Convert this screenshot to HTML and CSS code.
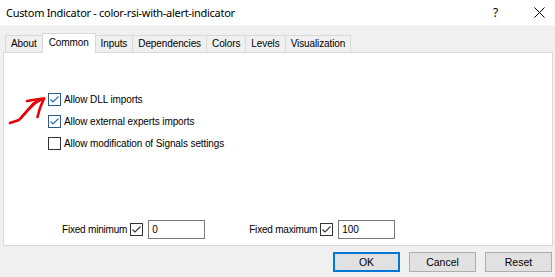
FILE: index.html
```html
<!DOCTYPE html>
<html lang="en">
<head>
  <meta charset="UTF-8" />
  <title>Custom Indicator</title>
  <link rel="stylesheet" href="styles.css">
</head>
<body>
  <div class="window">
    <div class="titlebar">
      <span class="title">Custom Indicator - color-rsi-with-alert-indicator</span>
      <span class="help">?</span>
      <svg class="close" width="11" height="11" viewBox="0 0 11 11">
        <path d="M0.5 0.5 L10.5 10.5 M10.5 0.5 L0.5 10.5" stroke="#000" stroke-width="1" fill="none"/>
      </svg>
    </div>

    <div class="tabs">
      <div class="tab">About</div>
      <div class="tab active">Common</div>
      <div class="tab">Inputs</div>
      <div class="tab">Dependencies</div>
      <div class="tab">Colors</div>
      <div class="tab">Levels</div>
      <div class="tab">Visualization</div>
    </div>

    <div class="panel">
      <div class="options">
        <label class="option">
          <span class="box checked">
            <svg width="11" height="11" viewBox="0 0 11 11"><path d="M1.5 5.5 L4 8 L9.5 2.5" stroke="#2b6cb0" stroke-width="1.2" fill="none"/></svg>
          </span>
          Allow DLL imports
        </label>
        <label class="option">
          <span class="box checked">
            <svg width="11" height="11" viewBox="0 0 11 11"><path d="M1.5 5.5 L4 8 L9.5 2.5" stroke="#2b6cb0" stroke-width="1.2" fill="none"/></svg>
          </span>
          Allow external experts imports
        </label>
        <label class="option">
          <span class="box"></span>
          Allow modification of Signals settings
        </label>
      </div>

      <div class="fixed">
        <div class="field">
          <span class="field-label">Fixed minimum</span>
          <span class="box small">
            <svg width="11" height="11" viewBox="0 0 11 11"><path d="M1.5 5.5 L4 8 L9.5 2.5" stroke="#333" stroke-width="1.1" fill="none"/></svg>
          </span>
          <input type="text" value="0">
        </div>
        <div class="field second">
          <span class="field-label">Fixed maximum</span>
          <span class="box small">
            <svg width="11" height="11" viewBox="0 0 11 11"><path d="M1.5 5.5 L4 8 L9.5 2.5" stroke="#333" stroke-width="1.1" fill="none"/></svg>
          </span>
          <input type="text" value="100">
        </div>
      </div>
    </div>

    <div class="buttons">
      <button class="default">OK</button>
      <button>Cancel</button>
      <button>Reset</button>
    </div>

    <!-- hand-drawn annotation -->
    <svg class="arrow" width="50" height="45" viewBox="0 85 50 45">
      <g stroke="#e8000b" stroke-width="2.6" fill="none" stroke-linecap="round" stroke-linejoin="round">
        <path d="M10 123 L19 120 L26 112 L33 104 L42 99"/>
        <path d="M21 118 L29 109 L36 102"/>
        <path d="M27 101 L36 99.5 L44 98.5"/>
        <path d="M44 98.5 L40 108 L37.5 117"/>
      </g>
    </svg>
  </div>
</body>
</html>
```

FILE: styles.css
```css
html, body {
  margin: 0;
  padding: 0;
}

body {
  background-color: #f0f0f0;
  font-family: "Liberation Sans", Arial, sans-serif;
  font-size: 10px;
  letter-spacing: -0.1px;
  color: #000;
}

.window {
  position: relative;
  width: 555px;
  height: 277px;
  overflow: hidden;
}

.titlebar {
  height: 25px;
  background-color: #fff;
  display: flex;
  align-items: center;
  padding: 0 10px 0 6px;
  font-family: "Noto Sans", "Open Sans", sans-serif;
  font-size: 11px;
  letter-spacing: -0.3px;
}

.title {
  flex: 1;
}

.help {
  margin-right: 36px;
  font-size: 12px;
}

.tabs {
  display: flex;
  align-items: flex-end;
  height: 19px;
  padding: 8px 0 0 5px;
}

.tab {
  height: 17px;
  line-height: 16px;
  padding: 0 5px;
  border: 1px solid #d9d9d9;
  border-bottom: none;
  margin-right: -1px;
  background-color: #f0f0f0;
  box-sizing: border-box;
}

.tab.active {
  position: relative;
  z-index: 1;
  height: 20px;
  line-height: 17px;
  margin-bottom: -1px;
  padding: 0 6px;
  background-color: #fff;
}

.panel {
  display: flex;
  flex-direction: column;
  height: 192px;
  margin: 0 2px 0 3px;
  background-color: #fff;
  border: 1px solid #d9d9d9;
}

.options {
  display: flex;
  flex-direction: column;
  gap: 9px;
  padding: 40px 0 0 44px;
}

.option {
  display: flex;
  align-items: center;
  height: 13px;
}

.box {
  display: inline-flex;
  align-items: center;
  justify-content: center;
  width: 13px;
  height: 13px;
  box-sizing: border-box;
  border: 1px solid #333;
  margin-right: 3px;
  background-color: #fff;
}

.box.checked {
  border-color: #2d5a87;
}

.box.small {
  margin: 0 0 0 3px;
}

.fixed {
  display: flex;
  margin-top: auto;
  margin-bottom: 6px;
  padding-left: 58px;
}

.field {
  display: flex;
  align-items: center;
}

.field-label {
  white-space: nowrap;
  letter-spacing: -0.2px;
}

.field.second {
  margin-left: 44px;
}

.field input {
  width: 57px;
  height: 19px;
  margin-left: 5px;
  padding: 0 3px;
  box-sizing: border-box;
  border: 1px solid #7a7a7a;
  font-family: inherit;
  font-size: inherit;
  outline: none;
}

.buttons {
  display: flex;
  justify-content: flex-end;
  gap: 9px;
  padding: 6px 3px 0 0;
}

button {
  width: 67px;
  height: 20px;
  padding: 0;
  border: 1px solid #adadad;
  background-color: #e1e1e1;
  font-family: inherit;
  font-size: 10.5px;
  color: #000;
}

button.default {
  border-color: #0078d7;
  box-shadow: inset 0 0 0 1px #0078d7;
}

.arrow {
  position: absolute;
  left: 0;
  top: 85px;
}
```
